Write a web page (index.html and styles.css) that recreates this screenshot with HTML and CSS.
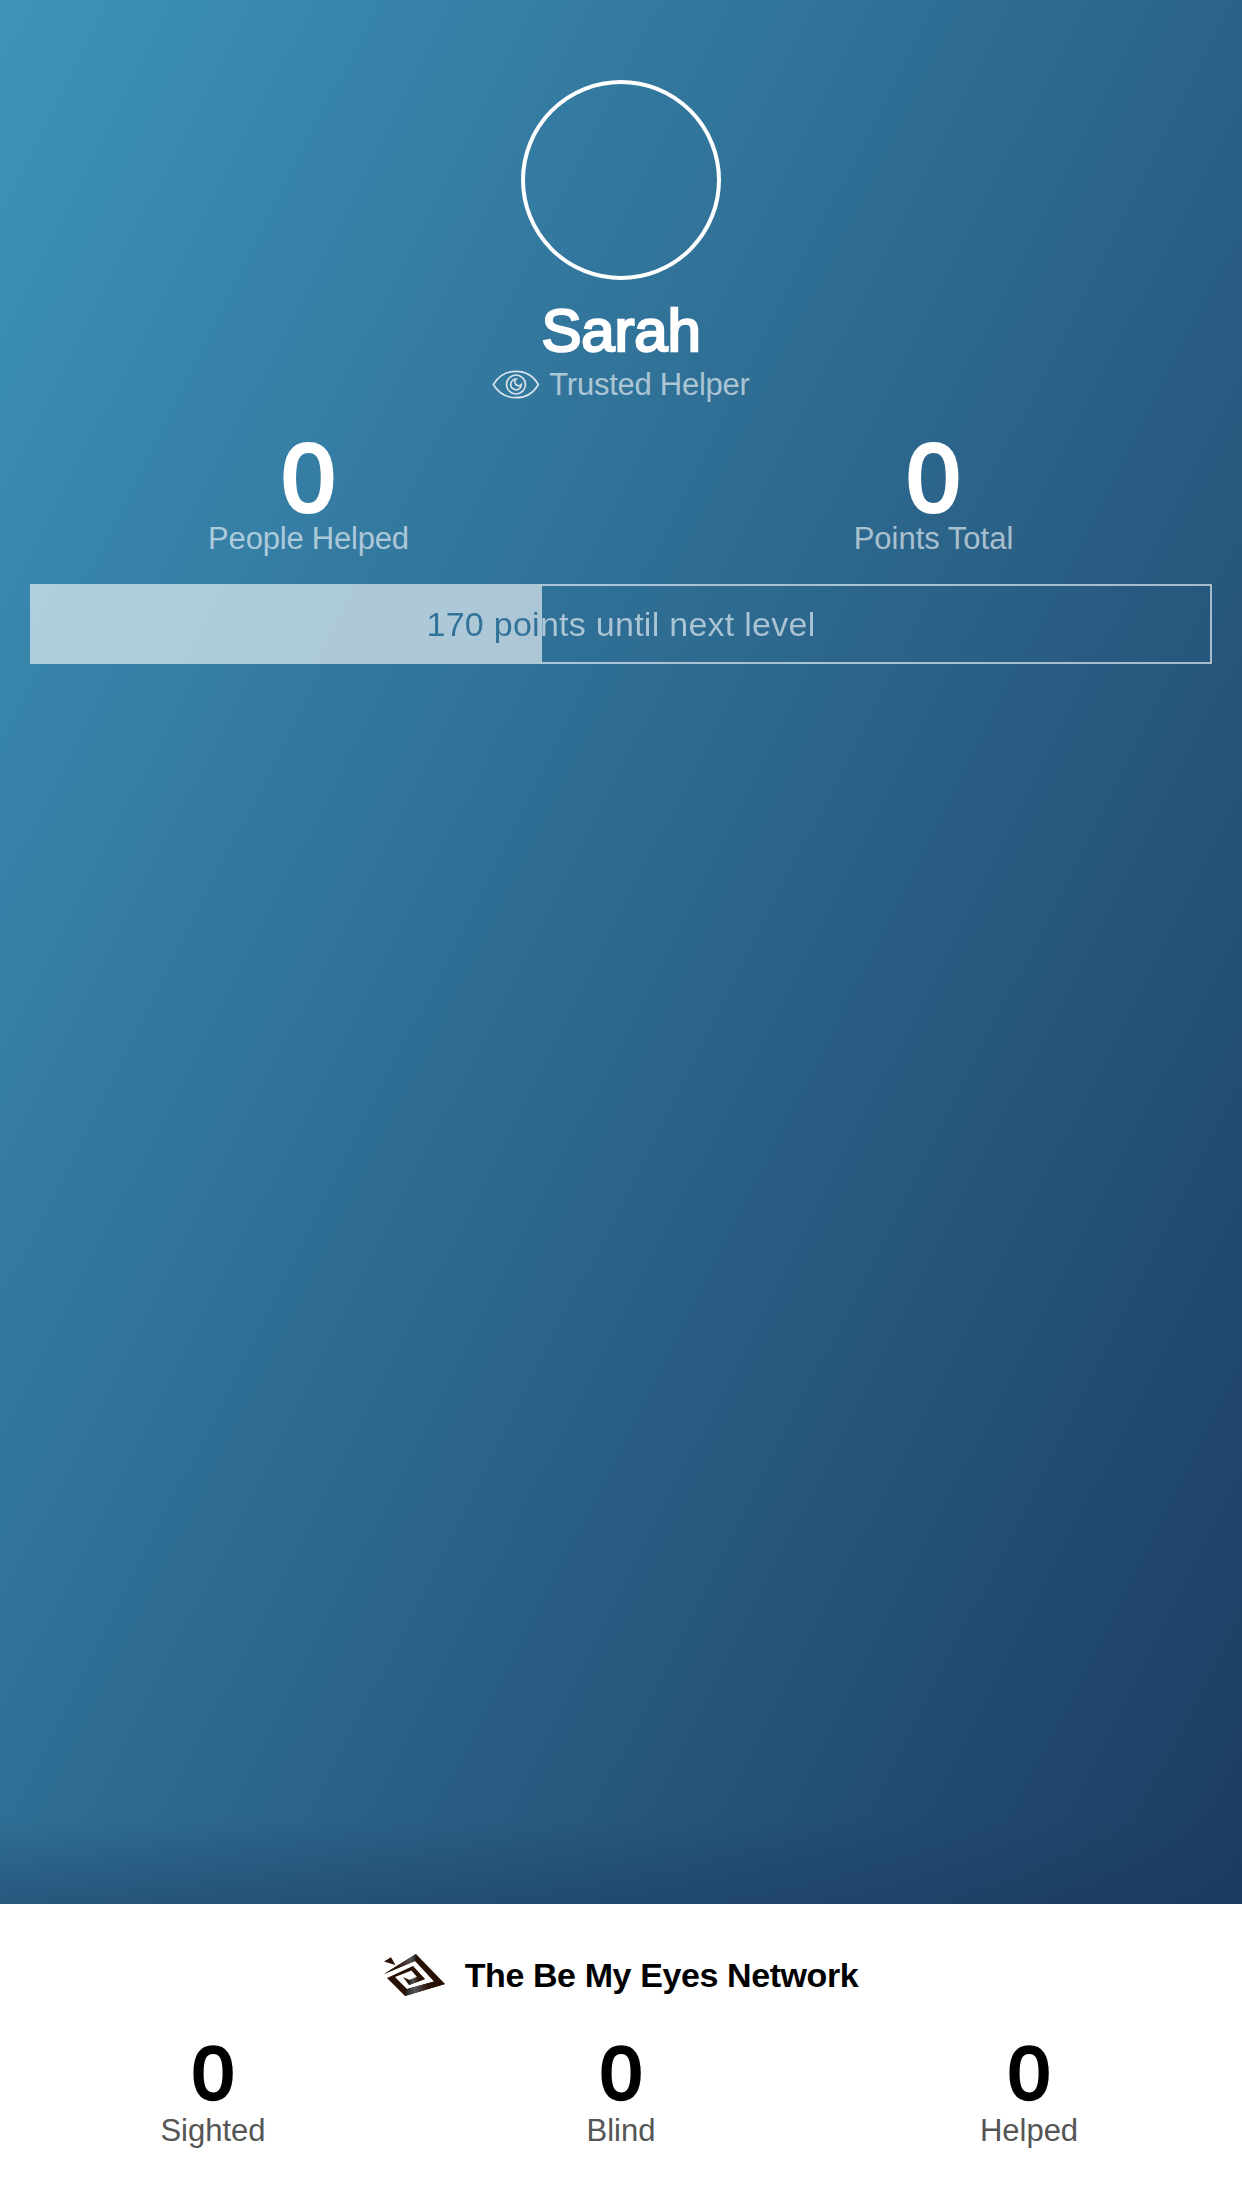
FILE: index.html
```html
<!DOCTYPE html>
<html lang="en">
<head>
<meta charset="utf-8">
<title>Be My Eyes</title>
<link rel="stylesheet" href="styles.css">
</head>
<body>
<div class="screen">
  <main class="profile">
    <div class="avatar"></div>
    <h1 class="name">Sarah</h1>
    <div class="role">
      <svg class="eye" viewBox="0 0 48 30" fill="none" stroke="currentColor" stroke-width="1.7">
        <path d="M1.3 14.5C6.2 6.5 14 1.3 24 1.3S41.8 6.5 46.3 14.5C41.8 22.500 34 27.700 24 27.700S6.200 22.500 1.300 14.500Z"/>
        <circle cx="24" cy="14.500" r="9.500"/>
        <path d="M24 9.200A5.300 5.300 0 1 0 29.300 14.600A3.400 3.400 0 0 1 24 9.200Z"/>
      </svg>
      <span class="role-text">Trusted Helper</span>
    </div>
    <div class="stats">
      <div class="stat"><span class="value">0</span><span class="label people">People Helped</span></div>
      <div class="stat"><span class="value">0</span><span class="label">Points Total</span></div>
    </div>
    <div class="progress">
      <div class="fill"></div>
      <div class="rest"></div>
      <div class="progress-text">170 points until next level</div>
    </div>
  </main>
  <footer class="network">
    <div class="brand">
      <svg class="logo" viewBox="0 0 62 43">
        <defs>
          <linearGradient id="top" x1="0" x2="1"><stop offset=".4" stop-color="#281002"/><stop offset=".85" stop-color="#55555a"/><stop offset="1" stop-color="#222"/></linearGradient>
          <linearGradient id="low" x1="0" x2="1"><stop offset="0" stop-color="#222"/><stop offset=".25" stop-color="#55555a"/><stop offset=".6" stop-color="#281002"/></linearGradient>
        </defs>
        <path fill="#281002" d="M0 7.500L7 3.200L11.500 11Z"/>
        <path fill="#281002" d="M0 20L32 0L61 30L21 42L3 24L29 12L41 25L25 31L19 23L25.500 26L33 23L27.500 16.500L11 23L23 35L50 27.500L31 7Z"/>
        <path fill="url(#top)" d="M0 20L32 0L31 7Z"/>
        <path fill="url(#low)" d="M21 42L23 35L50 27.500L61 30Z"/>
        <path fill="url(#low)" d="M25 31L25.500 26L33 23L41 25Z"/>
      </svg>
      <h2 class="brand-name">The Be My Eyes Network</h2>
    </div>
    <div class="totals">
      <div class="total"><span class="value">0</span><span class="label">Sighted</span></div>
      <div class="total"><span class="value">0</span><span class="label">Blind</span></div>
      <div class="total"><span class="value">0</span><span class="label">Helped</span></div>
    </div>
  </footer>
</div>
</body>
</html>
```
FILE: styles.css
```css
* { box-sizing: border-box; }
body {
  margin: 0;
  font-family: "Liberation Sans", Arial, sans-serif;
}
.screen {
  display: flex;
  flex-direction: column;
  width: 1242px;
  height: 2208px;
  overflow: hidden;
  background: linear-gradient(117deg, #3d93ba, #1a365b);
}
.profile {
  flex: 1;
  display: flex;
  flex-direction: column;
  align-items: center;
  padding: 80px 30px 0;
  background: linear-gradient(to top, rgba(27, 56, 94, .4), rgba(27, 56, 94, 0)) bottom / 100% 84px no-repeat;
}
.avatar {
  width: 200px;
  height: 200px;
  border: 4px solid #fff;
  border-radius: 50%;
}
.name {
  margin: 16px 0 0;
  color: #fff;
  font-size: 60px;
  line-height: 70px;
  font-weight: 400;
  letter-spacing: -.2px;
  -webkit-text-stroke: 2.4px #fff;
}
.role {
  display: flex;
  align-items: center;
  gap: 9px;
  height: 38px;
}
.eye {
  width: 48px;
  height: 30px;
  color: rgba(255, 255, 255, .8);
}
.role-text {
  color: rgba(255, 255, 255, .6);
  letter-spacing: -.25px;
}
.role-text, .label {
  font-size: 31px;
  line-height: 36px;
}
.stats {
  display: grid;
  grid-template-columns: 625px 625px;
  justify-content: center;
  align-self: stretch;
  margin-top: 26px;
  height: 154px;
}
.stat, .total {
  display: flex;
  flex-direction: column;
  align-items: center;
}
.stats .value {
  color: #fff;
  font-size: 96px;
  line-height: 96px;
  -webkit-text-stroke: 4px #fff;
}
.stats .label {
  margin-top: -5px;
  color: rgba(255, 255, 255, .6);
}
.stats .people { letter-spacing: -.2px; }
.progress {
  position: relative;
  display: flex;
  width: 1182px;
  height: 80px;
}
.fill {
  width: 512px;
  background: rgba(255, 255, 255, .6);
}
.rest {
  flex: 1;
  border: 2px solid rgba(255, 255, 255, .6);
  border-left: 0;
}
.progress-text {
  position: absolute;
  inset: 0;
  text-align: center;
  font-size: 34px;
  line-height: 80px;
  letter-spacing: .27px;
  color: transparent;
  background: linear-gradient(to right, #30729a 512px, rgba(255, 255, 255, .6) 512px);
  -webkit-background-clip: text;
  background-clip: text;
}
.network {
  height: 304px;
  padding-top: 48px;
  background: #fff;
  color: #000;
}
.brand {
  display: flex;
  justify-content: center;
  gap: 19px;
  height: 46px;
}
.logo {
  width: 62px;
  height: 43px;
  margin-top: 2px;
}
.brand-name {
  margin: 0;
  font-size: 34px;
  line-height: 46px;
  font-weight: 700;
  letter-spacing: -.4px;
}
.totals {
  display: grid;
  grid-template-columns: repeat(3, 408px);
  justify-content: center;
  margin-top: 37px;
}
.total .value {
  font-size: 75px;
  line-height: 77px;
  -webkit-text-stroke: 3.5px #000;
}
.total .label {
  margin-top: 1px;
  color: #555;
}
```
